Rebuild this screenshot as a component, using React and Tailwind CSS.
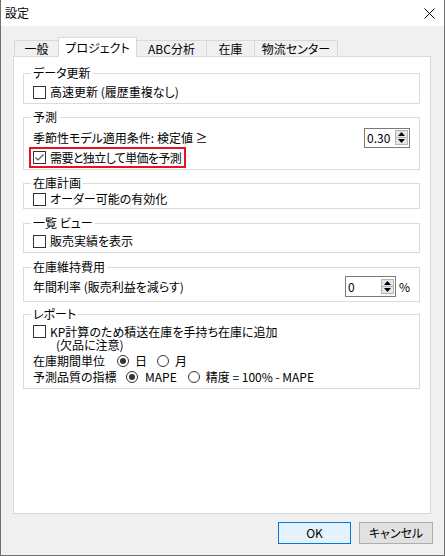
import React from 'react'

const CheckBox = ({ checked }) => (
    <span className="w-[13px] h-[13px] border border-[#333333] bg-white flex items-center justify-center shrink-0">
        {checked && (
            <svg width="11" height="11" viewBox="0 0 11 11">
                <path d="M1.5 5.5 L4 8 L9.5 2.5" fill="none" stroke="#555555" strokeWidth="1.2" />
            </svg>
        )}
    </span>
)

const Radio = ({ checked }) => (
    <span className="w-[12px] h-[12px] rounded-full border border-[#333333] bg-white flex items-center justify-center shrink-0">
        {checked && <span className="w-[6px] h-[6px] rounded-full bg-[#333333]"></span>}
    </span>
)

const Spinner = ({ value, className }) => (
    <div className={`flex items-center justify-between border border-[#7a7a7a] bg-white pl-[2px] pr-[1px] ${className}`}>
        <span className="leading-[14px]">{value}</span>
        <div className="flex flex-col w-[13px] h-[15px] border border-[#b5b5b5] bg-[#e6e6e6]">
            <span className="flex-1 flex items-center justify-center border-b border-[#b5b5b5]">
                <svg width="7" height="4" viewBox="0 0 7 4"><path d="M0 4 L3.5 0 L7 4 Z" fill="#000" /></svg>
            </span>
            <span className="flex-1 flex items-center justify-center">
                <svg width="7" height="4" viewBox="0 0 7 4"><path d="M0 0 L7 0 L3.5 4 Z" fill="#000" /></svg>
            </span>
        </div>
    </div>
)

const Group = ({ title, className, children }) => (
    <div className={`relative border border-[#dcdcdc] ml-[9px] w-[397px] pl-[9px] pr-[9px] ${className}`}>
        <span className="absolute -top-[8px] left-[7px] px-[2px] bg-white leading-[14px]">{title}</span>
        {children}
    </div>
)

const tabs = [
    { label: '一般', cls: 'w-[44px] h-[16px] border-l' },
    { label: 'プロジェクト', cls: 'w-[79px] h-[20px] border-l border-r bg-white -mb-px relative z-10', active: true },
    { label: 'ABC分析', cls: 'w-[69px] h-[16px]' },
    { label: '在庫', cls: 'w-[48px] h-[16px] border-l' },
    { label: '物流センター', cls: 'w-[84px] h-[16px] border-l border-r' }
]

const App = () => {
    return (
        <div className="w-[445px] h-[556px] flex flex-col bg-[#f0f0f0] border-x border-b border-[#707070] text-[12px] text-black whitespace-nowrap [font-feature-settings:'palt'] font-['Noto_Sans_CJK_JP','Noto_Sans_CJK_SC',sans-serif]">
            {/* Title bar */}
            <div className="h-[26px] shrink-0 bg-white flex items-center justify-between pl-[4px] pr-[9px]">
                <span className="leading-[14px]">設定</span>
                <svg width="11" height="11" viewBox="0 0 11 11">
                    <path d="M0.5 0.5 L10.5 10.5 M10.5 0.5 L0.5 10.5" stroke="#000" strokeWidth="1" />
                </svg>
            </div>

            <div className="flex flex-col pl-[12px] pr-[13px] pt-[11px]">
                {/* Tabs */}
                <div className="flex items-end h-[19px] pl-[1px]">
                    {tabs.map((t) => (
                        <div
                            key={t.label}
                            className={`flex items-center justify-center border-t border-[#d9d9d9] leading-[14px] ${t.active ? '' : 'bg-[#f0f0f0]'} ${t.cls}`}
                        >
                            {t.label}
                        </div>
                    ))}
                </div>

                {/* Panel */}
                <div className="h-[458px] bg-white border border-[#d9d9d9] flex flex-col">
                    <Group title="データ更新" className="mt-[16px] h-[31px] pt-[11px]">
                        <div className="flex items-center gap-[4px] h-[14px]">
                            <CheckBox />
                            <span className="leading-[14px]">高速更新 (履歴重複なし)</span>
                        </div>
                    </Group>

                    <Group title="予測" className="mt-[13px] h-[53px] pt-[10px]">
                        <div className="flex items-center justify-between h-[19px]">
                            <span className="leading-[14px]">季節性モデル適用条件: 検定値 ≥</span>
                            <Spinner value="0.30" className="w-[46px] h-[20px]" />
                        </div>
                        <div className="-ml-[4px] w-[157px] h-[21px] border-2 border-[#e81123] flex items-center gap-[4px] pl-[2px]">
                            <CheckBox checked />
                            <span className="leading-[14px] tracking-[-0.6px]">需要と独立して単価を予測</span>
                        </div>
                    </Group>

                    <Group title="在庫計画" className="mt-[13px] h-[26px] pt-[8px]">
                        <div className="flex items-center gap-[4px] h-[14px]">
                            <CheckBox />
                            <span className="leading-[14px]">オーダー可能の有効化</span>
                        </div>
                    </Group>

                    <Group title="一覧 ビュー" className="mt-[14px] h-[30px] pt-[10px]">
                        <div className="flex items-center gap-[4px] h-[14px]">
                            <CheckBox />
                            <span className="leading-[14px]">販売実績を表示</span>
                        </div>
                    </Group>

                    <Group title="在庫維持費用" className="mt-[14px] h-[35px] pt-[8px]">
                        <div className="flex items-center justify-between h-[21px]">
                            <span className="leading-[14px]">年間利率 (販売利益を減らす)</span>
                            <div className="flex items-center gap-[3px]">
                                <Spinner value="0" className="w-[51px] h-[21px]" />
                                <span className="leading-[14px]">%</span>
                            </div>
                        </div>
                    </Group>

                    <Group title="レポート" className="mt-[12px] h-[75px] pt-[10px]">
                        <div className="flex items-start gap-[4px]">
                            <CheckBox />
                            <div className="flex flex-col">
                                <span className="leading-[13px]">KP計算のため積送在庫を手持ち在庫に追加</span>
                                <span className="leading-[13px] pl-[6px]">(欠品に注意)</span>
                            </div>
                        </div>
                        <div className="mt-[2px] flex items-center h-[16px]">
                            <span className="leading-[14px] w-[84px]">在庫期間単位</span>
                            <Radio checked />
                            <span className="leading-[14px] ml-[6px]">日</span>
                            <span className="ml-[10px]"><Radio /></span>
                            <span className="leading-[14px] ml-[6px]">月</span>
                        </div>
                        <div className="flex items-center h-[16px]">
                            <span className="leading-[14px] w-[93px]">予測品質の指標</span>
                            <Radio checked />
                            <span className="leading-[14px] ml-[7px]">MAPE</span>
                            <span className="ml-[11px]"><Radio /></span>
                            <span className="leading-[14px] ml-[6px]">精度 = 100% - MAPE</span>
                        </div>
                    </Group>
                </div>

                {/* Buttons */}
                <div className="mt-[8px] -mr-[2px] flex justify-end gap-[8px]">
                    <button className="w-[73px] h-[22px] border border-[#0078d7] bg-[#e5f1fb] leading-[14px]">OK</button>
                    <button className="w-[74px] h-[22px] border border-[#adadad] bg-[#e1e1e1] leading-[14px]">キャンセル</button>
                </div>
            </div>
        </div>
    )
}

export default App
